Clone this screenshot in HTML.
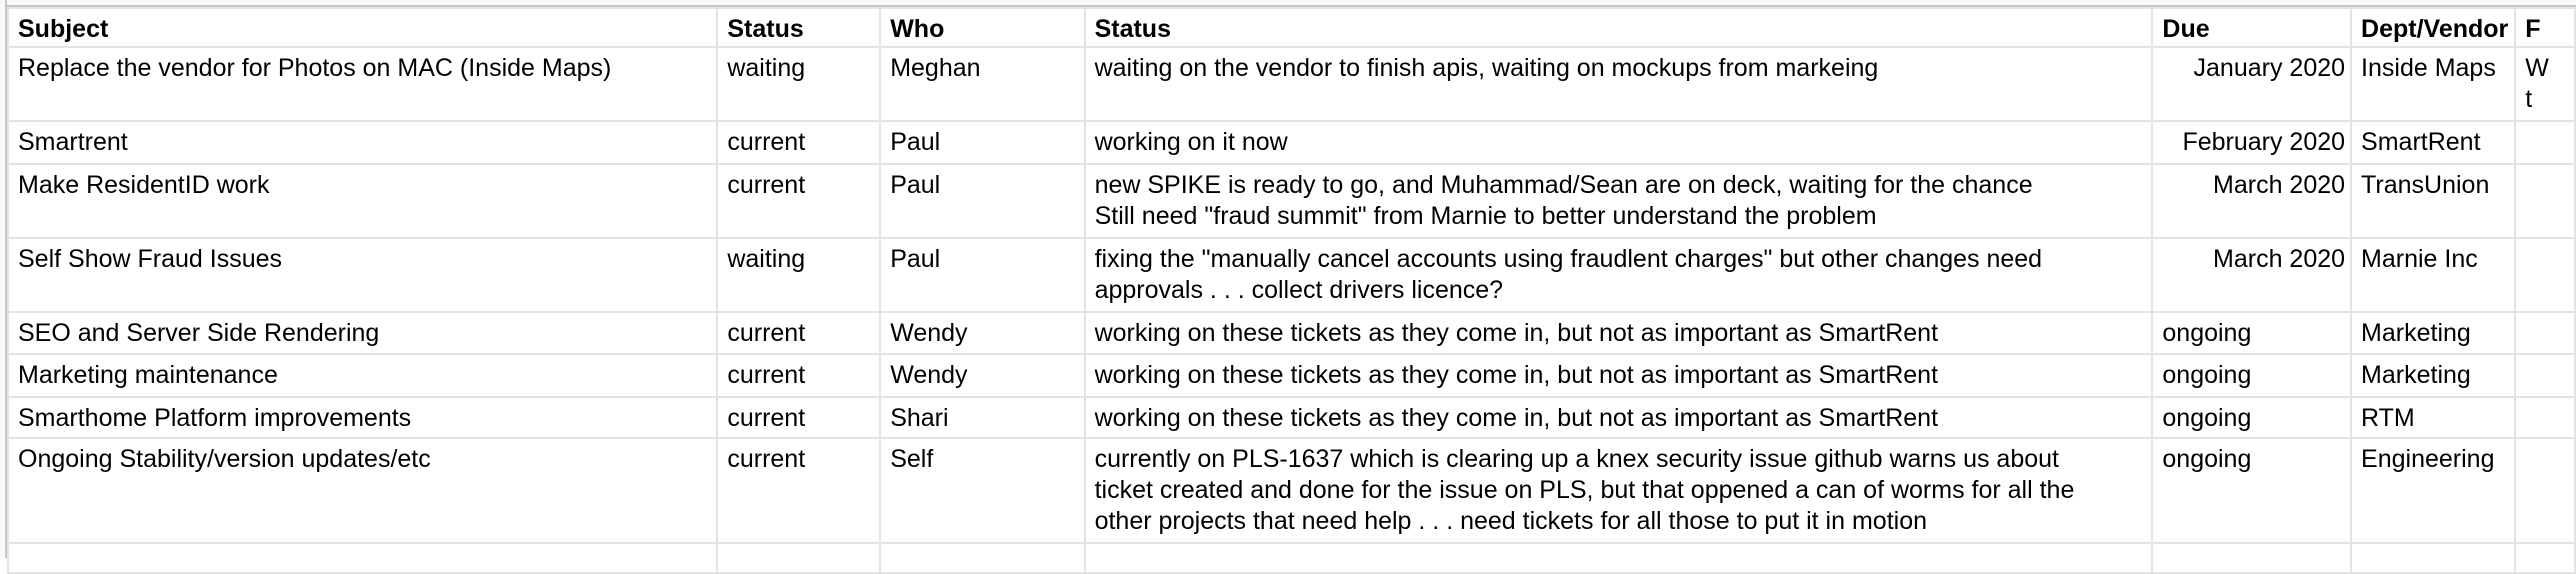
<!DOCTYPE html>
<html><head><meta charset="utf-8">
<style>
html,body{margin:0;padding:0;background:#fff;width:2576px;height:558px;overflow:hidden;}
.top{position:absolute;left:0;top:0;width:2576px;height:5px;background:#f8f9fa;border-bottom:2px solid #c4c7c5;}
.lft{position:absolute;left:0;top:0;width:5px;height:558px;background:#f8f9fa;border-right:2px solid #c4c7c5;}
table{position:absolute;left:7px;top:7px;border-collapse:collapse;table-layout:fixed;font-family:"Liberation Sans",Arial,sans-serif;font-size:25px;color:#000;}
td{border:2px solid #e2e3e3;vertical-align:top;padding:5px 6px 0 9px;line-height:31px;overflow:hidden;white-space:nowrap;}
tr.h td{font-weight:bold;}
td.r{text-align:right;padding-right:5px;}
</style></head><body>
<div class="top"></div><div class="lft"></div>
<table>
<colgroup><col style="width:711px"><col style="width:164px"><col style="width:206px"><col style="width:1069px"><col style="width:199px"><col style="width:164px"><col style="width:60px"></colgroup>
<tr class="h" style="height:39px"><td>Subject</td><td>Status</td><td>Who</td><td>Status</td><td>Due</td><td>Dept/Vendor</td><td>F</td></tr>
<tr style="height:74px"><td>Replace the vendor for Photos on MAC (Inside Maps)</td><td>waiting</td><td>Meghan</td><td>waiting on the vendor to finish apis, waiting on mockups from markeing</td><td class="r">January 2020</td><td>Inside Maps</td><td>W<br>t</td></tr>
<tr style="height:43px"><td>Smartrent</td><td>current</td><td>Paul</td><td>working on it now</td><td class="r">February 2020</td><td>SmartRent</td><td></td></tr>
<tr style="height:74px"><td>Make ResidentID work</td><td>current</td><td>Paul</td><td>new SPIKE is ready to go, and Muhammad/Sean are on deck, waiting for the chance<br>Still need "fraud summit" from Marnie to better understand the problem</td><td class="r">March 2020</td><td>TransUnion</td><td></td></tr>
<tr style="height:74px"><td>Self Show Fraud Issues</td><td>waiting</td><td>Paul</td><td>fixing the "manually cancel accounts using fraudlent charges" but other changes need<br>approvals . . . collect drivers licence?</td><td class="r">March 2020</td><td>Marnie Inc</td><td></td></tr>
<tr style="height:42px"><td>SEO and Server Side Rendering</td><td>current</td><td>Wendy</td><td>working on these tickets as they come in, but not as important as SmartRent</td><td>ongoing</td><td>Marketing</td><td></td></tr>
<tr style="height:43px"><td>Marketing maintenance</td><td>current</td><td>Wendy</td><td>working on these tickets as they come in, but not as important as SmartRent</td><td>ongoing</td><td>Marketing</td><td></td></tr>
<tr style="height:41px"><td>Smarthome Platform improvements</td><td>current</td><td>Shari</td><td>working on these tickets as they come in, but not as important as SmartRent</td><td>ongoing</td><td>RTM</td><td></td></tr>
<tr style="height:105px"><td>Ongoing Stability/version updates/etc</td><td>current</td><td>Self</td><td>currently on PLS-1637 which is clearing up a knex security issue github warns us about<br>ticket created and done for the issue on PLS, but that oppened a can of worms for all the<br>other projects that need help . . . need tickets for all those to put it in motion</td><td>ongoing</td><td>Engineering</td><td></td></tr>
<tr style="height:30px"><td></td><td></td><td></td><td></td><td></td><td></td><td></td></tr>
</table>
</body></html>
